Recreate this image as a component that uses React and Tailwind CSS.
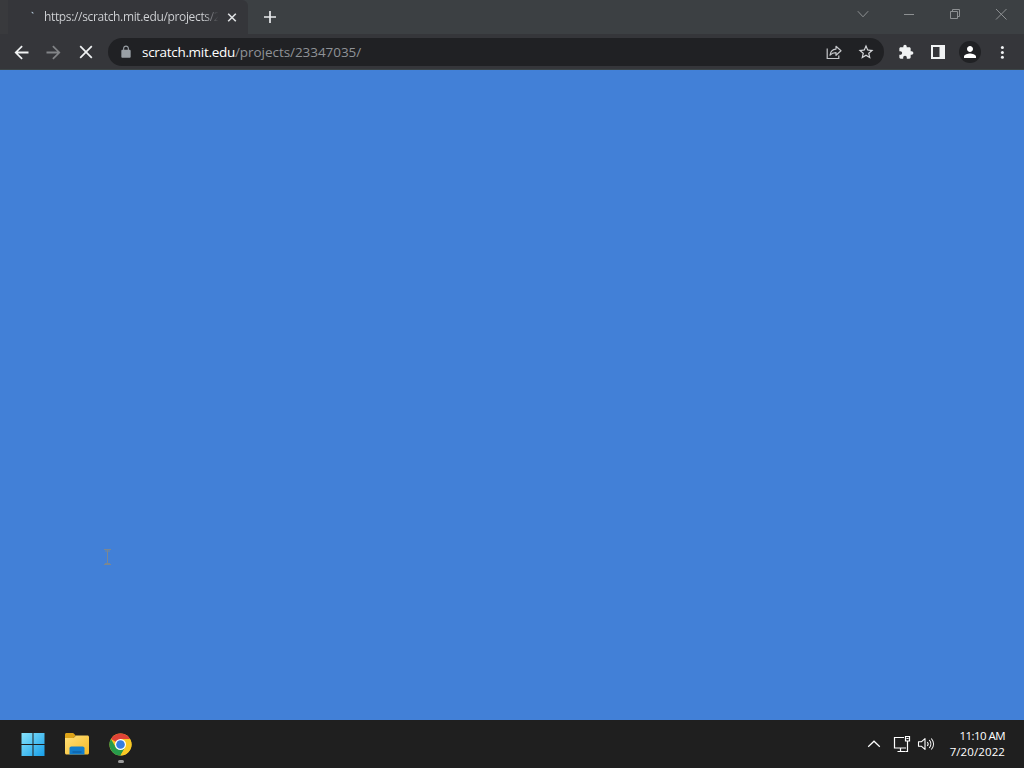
import React from 'react';

function TabStrip() {
  return (
    <div className="flex h-[34px] shrink-0 bg-[#3c4043]">
      <div className="w-2 bg-[#393a3d]" />
      <div className="flex w-60 items-center rounded-tr-md bg-[#35363a] pl-4 pr-2">
        {/* Loading spinner */}
        <svg className="h-4 w-4 shrink-0" viewBox="0 0 16 16">
          <path d="M7.200 2.800l1.800.3.700 1.600-1.600-.5z" fill="#a9bccb" />
        </svg>
        <span className="ml-1 w-[178px] whitespace-nowrap bg-gradient-to-r from-[#d3d5d8] from-90% to-[#35363a] to-98% bg-clip-text pb-px font-['Open_Sans',sans-serif] text-[12px] leading-4 tracking-[-0.35px] text-transparent">
          https://scratch.mit.edu/projects/2
        </span>
        <svg className="ml-0.5 h-4 w-4 shrink-0" viewBox="0 0 16 16" fill="none" stroke="#dfe1e3" strokeWidth="1.600">
          <path d="M4.200 4.700l7.600 7.600M11.800 4.700l-7.600 7.600" />
        </svg>
      </div>
      <button className="flex w-11 items-center justify-center">
        <svg className="h-4 w-4" viewBox="0 0 16 16" fill="none" stroke="#e8eaed" strokeWidth="1.700">
          <path d="M8 2v12M2 8h12" />
        </svg>
      </button>
      <div className="ml-auto flex h-7 text-[#8d9092]">
        <button className="flex w-[46px] items-center justify-center">
          <svg className="h-4 w-4" viewBox="0 0 16 16" fill="none" stroke="currentColor">
            <path d="M2.800 5.200L8 10.800l5.200-5.600" />
          </svg>
        </button>
        <button className="flex w-[46px] items-center justify-center">
          <svg className="h-4 w-4" viewBox="0 0 16 16" fill="none" stroke="currentColor">
            <path d="M3 8.500h10" />
          </svg>
        </button>
        <button className="flex w-[46px] items-center justify-center">
          <svg className="h-4 w-4" viewBox="0 0 16 16" fill="none" stroke="currentColor">
            <path d="M3.500 5.500h7v7h-7zM5.500 5.500v-2h7v7h-2" />
          </svg>
        </button>
        <button className="flex w-[46px] items-center justify-center">
          <svg className="h-4 w-4" viewBox="0 0 16 16" fill="none" stroke="currentColor">
            <path d="M3 3l10.500 10.500M13.500 3L3 13.500" />
          </svg>
        </button>
      </div>
    </div>
  );
}

function ToolButton({ children }) {
  return <button className="flex h-8 w-8 shrink-0 items-center justify-center">{children}</button>;
}

function Toolbar() {
  return (
    <div className="flex h-9 shrink-0 items-center border-b border-[#3c4547] bg-[#35363a] px-1.5 pt-px">
      <ToolButton>
        <svg className="mr-px h-[21px] w-[21px]" viewBox="0 0 24 24" fill="#f1f3f4">
          <path d="M20 10.900H7.830l5.590-5.490L12 4l-8 8 8 8 1.410-1.410L7.830 13.100H20z" />
        </svg>
      </ToolButton>
      <ToolButton>
        <svg className="mr-px h-[21px] w-[21px]" viewBox="0 0 24 24" fill="#828487">
          <path d="M4 10.900h12.170l-5.590-5.490L12 4l8 8-8 8-1.410-1.410 5.580-5.490H4z" />
        </svg>
      </ToolButton>
      <ToolButton>
        <svg className="h-5 w-5" viewBox="0 0 20 20" fill="none" stroke="#f1f3f4" strokeWidth="1.700">
          <path d="M4.200 4.200l11.600 11.600M15.800 4.200L4.200 15.800" />
        </svg>
      </ToolButton>

      {/* Address bar */}
      <div className="mx-1.5 flex h-7 flex-1 items-center rounded-full bg-[#202124] pl-[11px] pr-0.5">
        <svg className="h-[14px] w-[14px]" viewBox="0 0 24 24" fill="#9aa0a6">
          <path d="M18 8h-1V6c0-2.760-2.240-5-5-5S7 3.240 7 6v2H6c-1.100 0-2 .9-2 2v10c0 1.100.9 2 2 2h12c1.100 0 2-.9 2-2V10c0-1.100-.9-2-2-2zM8.900 8V6c0-1.710 1.390-3.100 3.100-3.100s3.100 1.390 3.100 3.100v2z" />
        </svg>
        <div className="ml-[9px] whitespace-nowrap font-['Open_Sans',sans-serif] text-[13.5px] leading-5 tracking-[-0.05px] text-[#8f9297]">
          <span className="tracking-[-0.3px] text-white">scratch.mit.edu</span>/projects/23347035/
        </div>
        <div className="ml-auto flex">
          <ToolButton>
            <svg className="h-[18px] w-[18px]" viewBox="0 0 18 18" fill="none" stroke="#c5c7ca" strokeWidth="1.200">
              <path d="M2.200 5.500v10h11.600v-3" />
              <path d="M5 12.200c.4-3.600 2.200-5.800 6-6.100V3.300l5 4.500-5 4.500V9.600c-2.800 0-4.500.8-6 2.600z" strokeLinejoin="round" />
            </svg>
          </ToolButton>
          <ToolButton>
            <svg className="h-[18px] w-[18px]" viewBox="0 0 24 24" fill="#d6d8db">
              <path d="M22 9.240l-7.190-.62L12 2 9.190 8.630 2 9.240l5.460 4.730L5.820 21 12 17.270 18.180 21l-1.630-7.030L22 9.240zM12 15.400l-3.760 2.270 1-4.280-3.320-2.880 4.380-.38L12 6.100l1.710 4.040 4.380.38-3.320 2.880 1 4.280L12 15.400z" />
            </svg>
          </ToolButton>
        </div>
      </div>

      <ToolButton>
        <svg className="h-4 w-4" viewBox="0 0 24 24" fill="#f1f3f4">
          <path d="M20.500 11H19V7c0-1.100-.9-2-2-2h-4V3.500C13 2.120 11.880 1 10.500 1S8 2.120 8 3.500V5H4c-1.100 0-1.990.9-1.990 2v3.800H3.500c1.490 0 2.700 1.210 2.700 2.700s-1.210 2.700-2.700 2.700H2V20c0 1.100.9 2 2 2h3.800v-1.500c0-1.490 1.210-2.700 2.700-2.700 1.490 0 2.700 1.210 2.700 2.700V22H17c1.100 0 2-.9 2-2v-4h1.500c1.380 0 2.500-1.120 2.500-2.500S21.880 11 20.500 11z" />
        </svg>
      </ToolButton>
      <ToolButton>
        <svg className="h-4 w-4" viewBox="0 0 16 16" fill="#f1f3f4">
          <path d="M1 1h14v14H1zM3 3v10h6.500V3z" fillRule="evenodd" />
        </svg>
      </ToolButton>
      <ToolButton>
        <div className="flex h-[22px] w-[22px] items-center justify-center rounded-full bg-[#202124]">
          <svg className="h-[18px] w-[18px]" viewBox="0 0 24 24" fill="#ffffff">
            <path d="M12 12c2.210 0 4-1.790 4-4s-1.790-4-4-4-4 1.790-4 4 1.790 4 4 4zm0 2c-2.670 0-8 1.340-8 4v2h16v-2c0-2.660-5.330-4-8-4z" />
          </svg>
        </div>
      </ToolButton>
      <ToolButton>
        <svg className="h-4 w-4" viewBox="0 0 16 16" fill="#f1f3f4">
          <circle cx="8.400" cy="3.500" r="1.500" />
          <circle cx="8.400" cy="8.400" r="1.500" />
          <circle cx="8.400" cy="13.300" r="1.500" />
        </svg>
      </ToolButton>
    </div>
  );
}

function Taskbar() {
  return (
    <div className="flex h-12 shrink-0 items-center bg-[#1f1f1f] pl-2.5 pr-[19px]">
      <button className="flex h-12 w-11 items-center justify-center">
        <svg className="ml-px h-6 w-6" viewBox="0 0 24 24">
          <defs>
            <linearGradient id="start" x1="0" y1="0" x2="24" y2="24" gradientUnits="userSpaceOnUse">
              <stop offset="0" stopColor="#8be5fc" />
              <stop offset="1" stopColor="#159de8" />
            </linearGradient>
          </defs>
          <path d="M.5 1h11v11H.5zM12.500 1h11v11h-11zM.5 13h11v11H.5zM12.500 13h11v11h-11z" fill="url(#start)" />
        </svg>
      </button>
      <button className="flex h-12 w-[45px] items-center justify-center">
        <svg className="h-6 w-[26px]" viewBox="0 0 26 24">
          <defs>
            <linearGradient id="folder" x1="0" y1="0" x2="1" y2="1">
              <stop offset="0" stopColor="#ffe07a" />
              <stop offset="1" stopColor="#f5b926" />
            </linearGradient>
          </defs>
          <path d="M1 2.500C1 1.700 1.600 1 2.500 1h6.700l2.600 2.600L9.500 6H1z" fill="#dda318" />
          <path d="M1 6h8.500l2.500-2.500h11.500c.8 0 1.500.7 1.500 1.500v16c0 .8-.7 1.500-1.500 1.500h-21C1.700 22.500 1 21.800 1 21z" fill="url(#folder)" />
          <path d="M5.500 22.500v-6.200c0-1 .8-1.800 1.800-1.800h11.400c1 0 1.800.8 1.800 1.800v6.200z" fill="#127dcc" />
          <path d="M8.500 19.500h9v1h-9z" fill="#0c5799" />
        </svg>
      </button>
      <button className="flex h-12 w-[43px] flex-col items-center pt-[13px]">
        <svg className="h-[23px] w-[23px] shrink-0" viewBox="0 0 48 48">
          <circle cx="24" cy="24" r="23" fill="#f9c925" />
          <path d="M24 24L4.080 12.500A23 23 0 0 1 43.920 12.500z" fill="#df4336" />
          <path d="M4.080 12.500A23 23 0 0 0 24 47L33.960 29.750 14.040 29.750z" fill="#279b4b" />
          <path d="M24 12.500h19.920A23 23 0 0 1 24 47l9.960-17.250z" fill="#f9c925" />
          <circle cx="24" cy="24" r="11.500" fill="#ffffff" />
          <circle cx="24" cy="24" r="9" fill="#367de0" />
        </svg>
        <span className="mt-1 h-[3px] w-1.5 rounded-full bg-[#9b9b9b]" />
      </button>

      {/* System tray */}
      <div className="ml-auto flex items-center text-white">
        <svg className="h-4 w-4" viewBox="0 0 16 16" fill="none" stroke="currentColor" strokeWidth="1.200">
          <path d="M2.200 10.800L8 5.200l5.800 5.600" />
        </svg>
        <svg className="ml-[11px] h-[18px] w-[18px]" viewBox="0 0 18 18" fill="none" stroke="currentColor" strokeWidth="1.200">
          <path d="M11 2.500H1.500v10.500H13M7.500 13v3.500M4.500 16.500h8" />
          <path d="M12.500 1.500h4v4.500h-4zM14.500 6v10.500h-2M13.500 3.500h2" />
        </svg>
        <svg className="ml-1.5 h-[18px] w-[18px]" viewBox="0 0 18 18" fill="none" stroke="currentColor" strokeWidth="1.100">
          <path d="M1.500 6.800h2.800L8 3.600v10.800l-3.700-3.200H1.500z" strokeLinejoin="round" />
          <path d="M10.300 7c1 1.200 1 2.800 0 4M12.300 5c2 2.300 2 5.700 0 8M14.300 3.500c2.900 3.300 2.900 7.700 0 11" />
        </svg>
        <div className="ml-3 w-[58px] whitespace-nowrap text-right font-['Open_Sans',sans-serif] text-[11.5px] leading-4">
          <div className="tracking-[-0.55px]">11:10 AM</div>
          <div className="tracking-[0.1px]">7/20/2022</div>
        </div>
      </div>
    </div>
  );
}

function App() {
  return (
    <div className="flex h-screen flex-col overflow-hidden">
      <TabStrip />
      <Toolbar />
      <main className="relative flex-1 bg-[#4280d7]">
        {/* Text cursor */}
        <svg className="absolute left-[103px] top-[478px] h-[18px] w-[9px]" viewBox="0 0 9 18" fill="none" stroke="#7b8791">
          <path d="M1 1.500h7M2 3h5M4.500 2v14M2 15.500h5M1 16.500h7" />
        </svg>
      </main>
      <Taskbar />
    </div>
  );
}

export default App;
